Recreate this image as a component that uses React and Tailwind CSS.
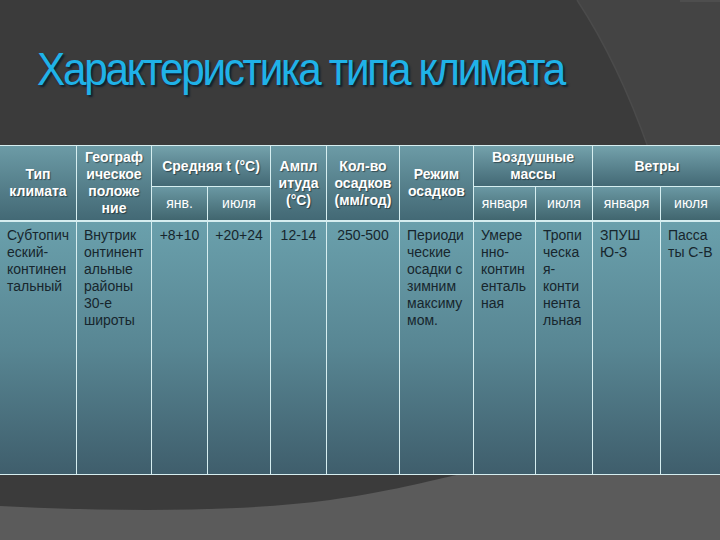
import React from "react";

const COLS =
  "grid-cols-[76px_74px_55px_62px_55px_72px_73px_61px_56px_67px_60px]";

const headCell =
  "bg-gradient-to-b from-[#6c9ba6] to-[#436975] text-white font-bold text-[14px] leading-[17px] [text-shadow:1px_1px_1px_rgba(0,0,0,0.45)] flex items-center justify-center text-center";
const subCell =
  "bg-gradient-to-b from-[#6a98a3] to-[#41666f] text-white text-[14px] leading-[17px] flex items-center justify-center text-center";
const dataCell =
  "bg-gradient-to-b from-[#6aa0ac] via-[#588693] to-[#3f5e6c] text-[#17262d] text-[14px] leading-[17px] pt-[5px] px-[7px] border-t border-[#d6eef0]";

const Lines = ({ items }) =>
  items.map((t, i) => (
    <span key={i} className="block">
      {t}
    </span>
  ));

const Background = () => (
  <svg
    className="absolute inset-0 h-full w-full"
    viewBox="0 0 720 540"
    preserveAspectRatio="none"
  >
    <path d="M577 0 Q618 62 649 150 L720 150 L720 0 Z" fill="#444444" />
    <path d="M577 0 Q618 62 649 150" stroke="#4b4b4b" strokeWidth="1.5" fill="none" />
    <rect x="680" y="0" width="40" height="2" fill="#4e4e4e" />
    <path
      d="M0 506 C120 512 240 512 330 500 C400 490 440 478 462 474 L720 474 L720 540 L0 540 Z"
      fill="#5b5b5b"
    />
  </svg>
);

export default function App() {
  return (
    <div className="relative h-[540px] w-[720px] overflow-hidden bg-[#3b3b3b] font-['Liberation_Sans',Arial,sans-serif]">
      <Background />
      <div className="relative">
        <div className="h-[145px] pl-[37px] pt-[44px]">
          <h1 className="origin-left scale-x-[0.92] whitespace-nowrap text-[46px] leading-[50px] tracking-[-2.5px] text-[#1fb2e8] [text-shadow:2px_2px_2px_#10202e]">
            Характеристика типа климата
          </h1>
        </div>

        <div className={`grid ${COLS} gap-px bg-[#d6eef0] border-y border-[#d6eef0] grid-rows-[40px_33px_253px]`}>
          <div className={`${headCell} row-span-2`}>
            <div>
              <Lines items={["Тип", "климата"]} />
            </div>
          </div>
          <div className={`${headCell} row-span-2`}>
            <div>
              <Lines items={["Географ", "ическое", "положе", "ние"]} />
            </div>
          </div>
          <div className={`${headCell} col-span-2 from-[#74a2ac] to-[#5b8893]`}>
            Средняя t (°C)
          </div>
          <div className={`${headCell} row-span-2`}>
            <div>
              <Lines items={["Ампл", "итуда", "(°C)"]} />
            </div>
          </div>
          <div className={`${headCell} row-span-2`}>
            <div>
              <Lines items={["Кол-во", "осадков", "(мм/год)"]} />
            </div>
          </div>
          <div className={`${headCell} row-span-2`}>
            <div>
              <Lines items={["Режим", "осадков"]} />
            </div>
          </div>
          <div className={`${headCell} col-span-2 from-[#74a2ac] to-[#5b8893]`}>
            <div>
              <Lines items={["Воздушные", "массы"]} />
            </div>
          </div>
          <div className={`${headCell} col-span-2 from-[#74a2ac] to-[#5b8893]`}>
            Ветры
          </div>

          <div className={subCell}>янв.</div>
          <div className={subCell}>июля</div>
          <div className={subCell}>января</div>
          <div className={subCell}>июля</div>
          <div className={subCell}>января</div>
          <div className={subCell}>июля</div>

          <div className={dataCell}>
            <Lines items={["Субтопич", "еский-", "континен", "тальный"]} />
          </div>
          <div className={dataCell}>
            <Lines items={["Внутрик", "онтинент", "альные", "районы", "30-е", "широты"]} />
          </div>
          <div className={`${dataCell} text-center px-0`}>+8+10</div>
          <div className={`${dataCell} text-center px-0`}>+20+24</div>
          <div className={`${dataCell} text-center px-0`}>12-14</div>
          <div className={`${dataCell} text-center px-0`}>250-500</div>
          <div className={dataCell}>
            <Lines items={["Периоди", "ческие", "осадки с", "зимним", "максиму", "мом."]} />
          </div>
          <div className={dataCell}>
            <Lines items={["Умере", "нно-", "контин", "енталь", "ная"]} />
          </div>
          <div className={dataCell}>
            <Lines items={["Тропи", "ческа", "я-", "конти", "нента", "льная"]} />
          </div>
          <div className={dataCell}>
            <Lines items={["ЗПУШ", "Ю-З"]} />
          </div>
          <div className={dataCell}>
            <Lines items={["Пасса", "ты С-В"]} />
          </div>
        </div>
      </div>
    </div>
  );
}
